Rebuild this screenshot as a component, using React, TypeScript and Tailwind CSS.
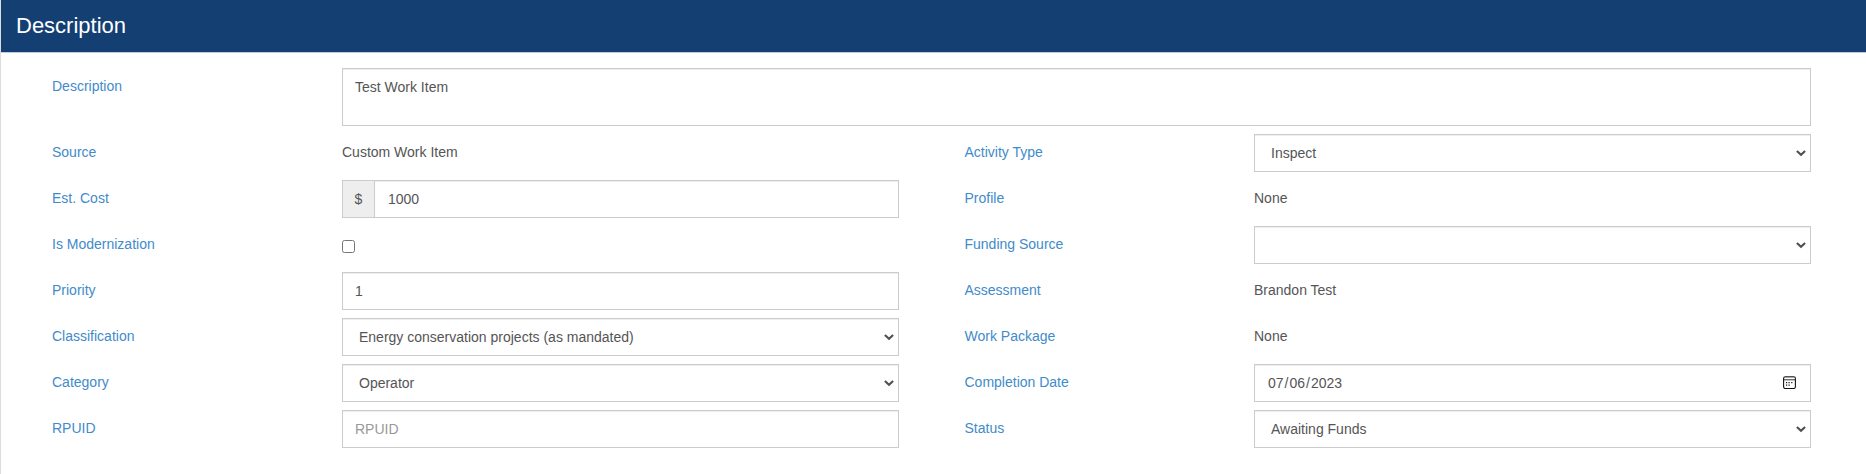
import type { ReactNode } from "react";

const box =
  "block w-full border border-[#ccc] bg-white px-3 text-[14px] leading-5 text-[#555] shadow-[inset_0_1px_1px_rgba(0,0,0,0.075)] outline-none placeholder:text-[#999]";

function Label({ children }: { children: ReactNode }) {
  return <div className="w-[290px] shrink-0 pt-2 text-[#428bca]">{children}</div>;
}

function Field({ label, children }: { label: string; children: ReactNode }) {
  return (
    <div className="flex h-[38px]">
      <Label>{label}</Label>
      <div className="min-w-0 flex-1">{children}</div>
    </div>
  );
}

function Select({ value }: { value: string }) {
  return (
    <div className="relative">
      <select className={`${box} h-[38px] appearance-none pl-4`} defaultValue={value}>
        <option>{value}</option>
      </select>
      <svg
        className="pointer-events-none absolute top-4 right-[5px] h-[7px] w-[10px]"
        viewBox="0 0 10 7"
        fill="none"
      >
        <path d="M0.9 0.9 5 4.8 9.1 0.9" stroke="#505050" strokeWidth="2.1" />
      </svg>
    </div>
  );
}

function Text({ children }: { children: ReactNode }) {
  return <div className="pt-2">{children}</div>;
}

function CalendarIcon() {
  return (
    <svg className="block size-[13px]" viewBox="0 0 13 13" fill="none">
      <rect x="0.6" y="0.7" width="11.8" height="11.8" rx="1.8" stroke="#101010" strokeWidth="1.1" />
      <path d="M1 1.2h11" stroke="#777" strokeWidth="0.6" />
      <path d="M1 3.8h11" stroke="#333" strokeWidth="1" />
      <path d="M5.5 6.6h1.2M8.2 6.6h1.2M3 6.6h1.2M3 9.1h1.2M5.5 9.1h1.2" stroke="#101010" strokeWidth="1.2" />
    </svg>
  );
}

export default function App() {
  return (
    <div className="h-[474px] overflow-hidden border-l border-[#ddd] bg-white font-['Liberation_Sans',Arial,sans-serif] text-[14px] leading-5 text-[#555]">
      <header className="flex h-[53px] items-center border-b border-[#c3cbd6] bg-[#133f73] px-[15px] pb-px text-[22px] leading-6 text-white">
        Description
      </header>
      <main className="pt-[15px] pr-[55px] pl-[51px]">
        <div className="mb-2 flex">
          <Label>Description</Label>
          <textarea className={`${box} h-[58px] min-w-0 flex-1 resize-none py-2`} defaultValue="Test Work Item" />
        </div>
        <div className="grid grid-cols-2 gap-x-[65px]">
          <div className="flex flex-col gap-2">
            <Field label="Source">
              <Text>Custom Work Item</Text>
            </Field>
            <Field label="Est. Cost">
              <div className="flex">
                <span className="flex h-[38px] w-8 shrink-0 items-center justify-center border border-r-0 border-[#ccc] bg-[#eee]">$</span>
                <input className={`${box} h-[38px] pl-[13px]`} defaultValue="1000" />
              </div>
            </Field>
            <Field label="Is Modernization">
              <input type="checkbox" className="mt-[14px] block size-[13px]" />
            </Field>
            <Field label="Priority">
              <input className={`${box} h-[38px]`} defaultValue="1" />
            </Field>
            <Field label="Classification">
              <Select value="Energy conservation projects (as mandated)" />
            </Field>
            <Field label="Category">
              <Select value="Operator" />
            </Field>
            <Field label="RPUID">
              <input className={`${box} h-[38px]`} placeholder="RPUID" />
            </Field>
          </div>
          <div className="flex flex-col gap-2 [&>div>div:first-child]:pl-[0.5px]">
            <Field label="Activity Type">
              <Select value="Inspect" />
            </Field>
            <Field label="Profile">
              <Text>None</Text>
            </Field>
            <Field label="Funding Source">
              <Select value="" />
            </Field>
            <Field label="Assessment">
              <Text>Brandon Test</Text>
            </Field>
            <Field label="Work Package">
              <Text>None</Text>
            </Field>
            <Field label="Completion Date">
              <div className="relative">
                <input
                  type="date"
                  className={`${box} h-[38px] [&::-webkit-calendar-picker-indicator]:opacity-0`}
                  defaultValue="2023-07-06"
                />
                <span className="pointer-events-none absolute top-[12px] right-[15px]">
                  <CalendarIcon />
                </span>
              </div>
            </Field>
            <Field label="Status">
              <Select value="Awaiting Funds" />
            </Field>
          </div>
        </div>
      </main>
    </div>
  );
}
